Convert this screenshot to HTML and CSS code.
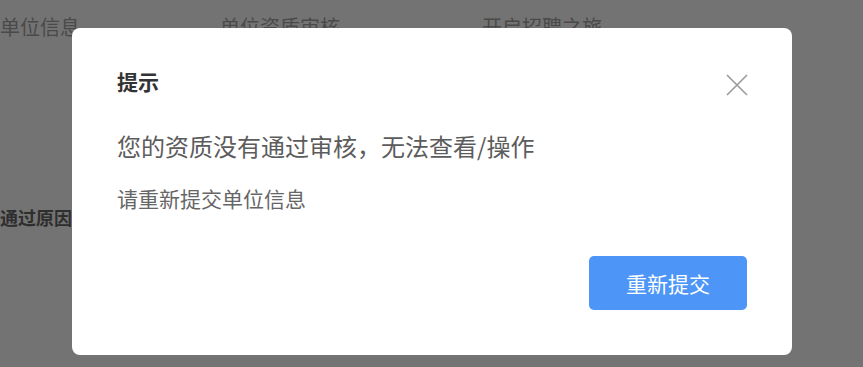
FILE: index.html
```html
<!DOCTYPE html>
<html lang="zh-CN">
<head>
<meta charset="utf-8">
<link rel="stylesheet" href="styles.css">
</head>
<body>
<div class="page">
  <div class="steps">
    <span class="step step-1">单位信息</span>
    <span class="step step-2">单位资质审核</span>
    <span class="step step-3">开启招聘之旅</span>
  </div>
  <div class="reason">通过原因</div>
</div>
<div class="modal">
  <div class="modal-head">
    <div class="modal-title">提示</div>
    <svg class="close" width="22" height="22" viewBox="0 0 22 22"><path d="M1 1L21 21M21 1L1 21" stroke="#9a9a9a" stroke-width="1.6" fill="none"/></svg>
  </div>
  <div class="msg">您的资质没有通过审核，无法查看/操作</div>
  <div class="sub">请重新提交单位信息</div>
  <div class="foot"><button class="btn">重新提交</button></div>
</div>
</body>
</html>
```
FILE: styles.css
```css
html, body {
  margin: 0;
  padding: 0;
  width: 863px;
  height: 367px;
  overflow: hidden;
  background: #737373;
  font-family: "Noto Sans CJK SC", "Noto Sans", sans-serif;
}
.page {
  padding-top: 15px;
}
.steps {
  display: flex;
  font-size: 20px;
  line-height: 24px;
  color: #4a4a4a;
}
.step-1 { margin-left: 0; }
.step-2 { margin-left: 140px; }
.step-3 { margin-left: 142px; }
.reason {
  margin-top: 167px;
  font-size: 18px;
  line-height: 22px;
  font-weight: bold;
  color: #2e2e2e;
}
.modal {
  position: absolute;
  left: 72px;
  top: 28px;
  width: 720px;
  height: 327px;
  box-sizing: border-box;
  background: #fff;
  border-radius: 8px;
  padding: 40px 45px 45px;
  display: flex;
  flex-direction: column;
}
.modal-head {
  display: flex;
  justify-content: space-between;
  align-items: flex-start;
  height: 27px;
}
.modal-title {
  font-size: 21px;
  line-height: 27px;
  font-weight: bold;
  color: #333;
}
.close {
  margin-top: 6px;
  margin-right: -1px;
}
.msg {
  margin-top: 36px;
  font-size: 24px;
  line-height: 30px;
  color: #5c5c5c;
}
.sub {
  margin-top: 24px;
  font-size: 21px;
  line-height: 26px;
  color: #666;
}
.foot {
  margin-top: auto;
  display: flex;
  justify-content: flex-end;
}
.btn {
  width: 158px;
  height: 54px;
  border: none;
  border-radius: 5px;
  background: #4d96f8;
  color: #fff;
  font-family: inherit;
  font-size: 21px;
  padding: 0;
}
```
